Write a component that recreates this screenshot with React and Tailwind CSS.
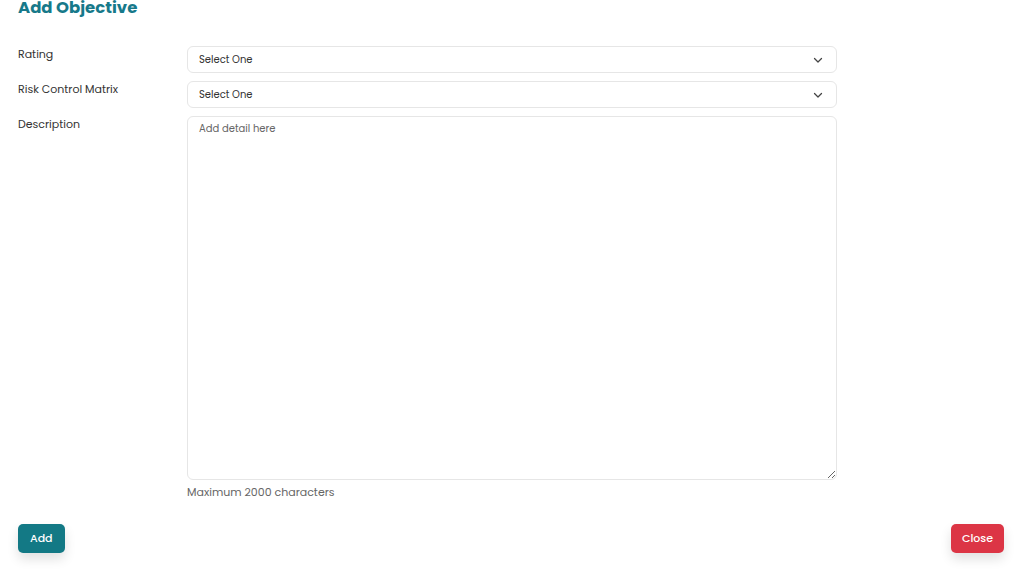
import React from "react";

function Chevron() {
  return (
    <svg width="12" height="12" viewBox="0 0 24 24" fill="none" stroke="#444" strokeWidth="2.5" strokeLinecap="round" strokeLinejoin="round">
      <path d="M5 9l7 7 7-7" />
    </svg>
  );
}

function Select() {
  return (
    <div className="flex h-[27px] w-full items-center justify-between rounded-[6px] border border-[#e6e6e6] bg-white pl-[11px] pr-[12px] text-[10px] text-[#333]">
      <span>Select One</span>
      <Chevron />
    </div>
  );
}

export default function App() {
  return (
    <div className="relative h-[588px] w-[1024px] overflow-hidden bg-white text-[#333]" style={{ fontFamily: '"Poppins", "Inter", "Noto Sans", sans-serif' }}>
      <div className="px-[18px]">
        <h1 className="-mt-[3px] text-[16.5px] font-bold leading-[22px] text-[#17798a]">Add Objective</h1>
        <div className="mt-[27px] grid grid-cols-[169px_650px] gap-y-[8px]">
          <div className="pt-[1px] text-[11px] leading-[14px]">Rating</div>
          <Select />
          <div className="pt-[1px] text-[11px] leading-[14px]">Risk Control Matrix</div>
          <Select />
          <div className="pt-[1px] text-[11px] leading-[14px]">Description</div>
          <div>
            <textarea
              placeholder="Add detail here"
              className="block h-[364px] w-full resize-y rounded-[6px] border border-[#e6e6e6] px-[11px] py-[4px] text-[10px] outline-none placeholder:text-[#666]"
            />
            <div className="mt-[4px] text-[11px] text-[#666]">Maximum 2000 characters</div>
          </div>
        </div>
        <div className="mt-[23px] flex justify-between pr-[2px]">
          <button className="h-[29px] rounded-[5px] bg-[#137985] px-[12px] text-[11px] font-medium text-white shadow-[0_6px_12px_rgba(0,0,0,0.12)]">Add</button>
          <button className="h-[29px] rounded-[5px] bg-[#dc3545] px-[11px] text-[11px] font-medium text-white shadow-[0_6px_12px_rgba(0,0,0,0.12)]">Close</button>
        </div>
      </div>
    </div>
  );
}
